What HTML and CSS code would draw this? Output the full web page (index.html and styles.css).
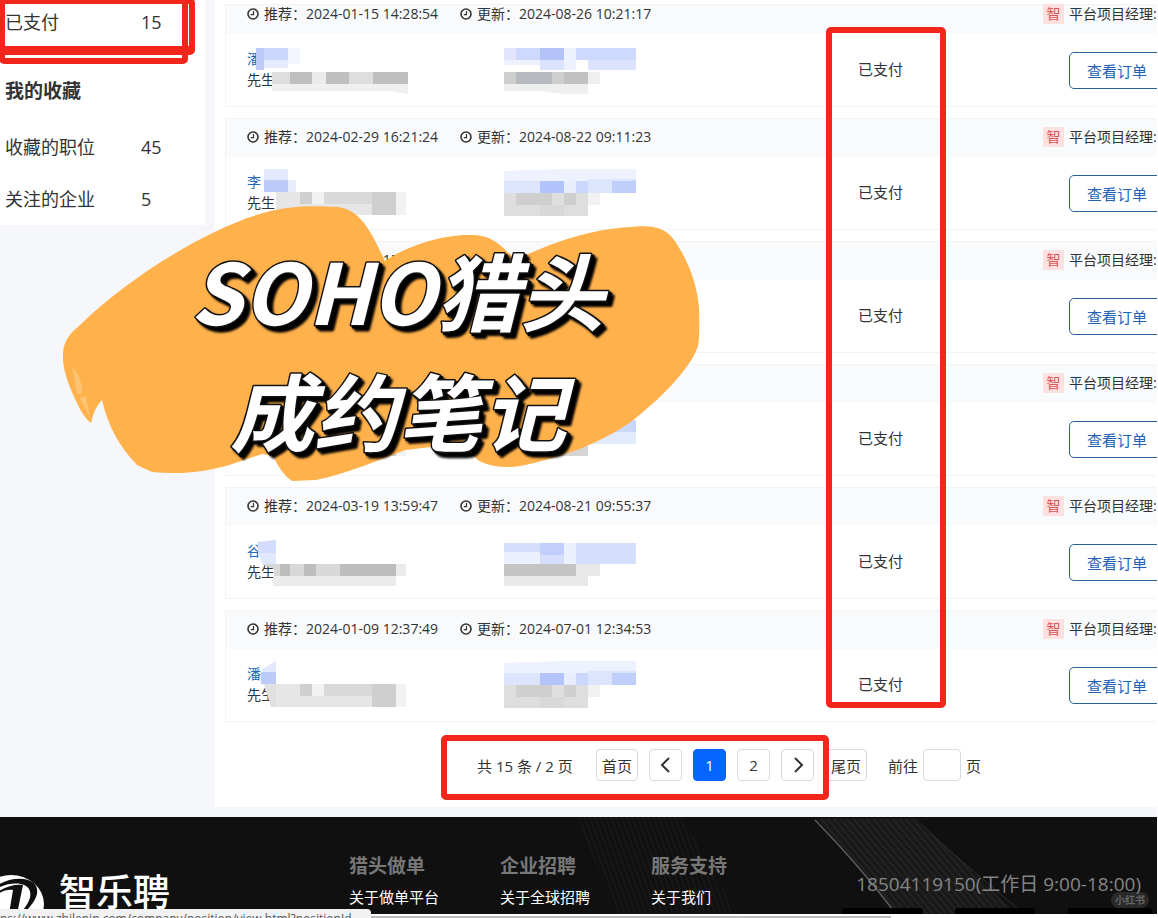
FILE: index.html
```html
<!DOCTYPE html>
<html lang="zh-CN">
<head>
<meta charset="utf-8">
<title>智乐聘</title>
<link rel="stylesheet" href="styles.css">
</head>
<body>
<svg class="defs" aria-hidden="true">
  <symbol id="clock" viewBox="0 0 12 12"><circle cx="6" cy="6" r="5" fill="none" stroke="#333" stroke-width="1.6"/><path d="M6.5 3v3.6H3.8" fill="none" stroke="#333" stroke-width="1.2"/></symbol>
  <symbol id="mosaic-post" viewBox="0 0 132 48">
    <path fill="#eef1fe" d="M0 2L60 0H132V12H0z"/><path fill="#dde5fd" d="M0 12H36V24H0zM84 10H132V24H84z"/><path fill="#b3c3fb" d="M36 12H60V24H36z"/><path fill="#e8eefe" d="M60 12H72V24H60z"/><path fill="#cbd8fc" d="M72 12H84V24H72z"/><path fill="#bfcefb" d="M108 12H132V24H108z"/>
    <path fill="#dedede" d="M0 24H84V47H0z"/><path fill="#cfcfcf" d="M12 24H48V36H12zM60 24H72V36H60z"/><path fill="#f1f1f1" d="M84 24H96V36H84z"/><path fill="#d8d8d8" d="M36 36H60V47H36z"/>
  </symbol>
  <symbol id="mosaic-post-dark" viewBox="0 0 132 48">
    <path fill="#e3e4fd" d="M0 0H12V12H0z"/><path fill="#cdd9fd" d="M12 0H36V12H12zM72 0H132V12H72z"/><path fill="#b4c4fb" d="M36 0H60V12H36z"/><path fill="#edf2fe" d="M60 0H72V22H60zM0 12H36V17H0z"/><path fill="#dbe3fe" d="M36 12H60V22H36zM84 12H132V22H84z"/>
    <path fill="#cecece" d="M0 24H12V36H0zM48 24H60V36H48z"/><path fill="#b7babf" d="M12 24H48V36H12z"/><path fill="#c1c1c1" d="M60 24H84V36H60z"/><path fill="#efefef" d="M84 24H96V36H84zM0 36H84V46H60L36 43H0z"/>
  </symbol>
  <symbol id="mosaic-info" viewBox="0 0 132 24">
    <path fill="#e6e6e6" d="M0 0H120V23H0z"/><path fill="#cfcfcf" d="M24 0H36V12H24zM96 0H120V23H96z"/><path fill="#f2f2f2" d="M36 0H48V12H36zM120 0H130V23H120z"/><path fill="#d9d9d9" d="M48 0H96V12H48z"/>
  </symbol>
  <symbol id="mosaic-info-dark" viewBox="0 0 136 24">
    <path fill="#dedede" d="M0 0H136V12H0z"/><path fill="#bfbfbf" d="M18 0H40V12H18zM54 0H77V12H54zM101 0H136V12H101z"/><path fill="#ebebeb" d="M40 0H54V12H40z"/><path fill="#f0f0f0" d="M0 12H136V22L118 19H0z"/>
  </symbol>
</svg>

<div class="page">
  <div class="content">
    <aside class="sidebar">
      <nav class="menu">
        <a class="menu-item menu-item-first" href="#"><span>已支付</span><span>15</span></a>
        <h2 class="menu-title">我的收藏</h2>
        <a class="menu-item" href="#"><span>收藏的职位</span><span>45</span></a>
        <a class="menu-item" href="#"><span>关注的企业</span><span>5</span></a>
      </nav>
    </aside>

    <main class="main">
      <section class="orders">
        <article class="card card-cut">
          <header class="card-head">
            <span class="stamp"><svg class="clock"><use href="#clock"/></svg>推荐：<time>2024-01-15 14:28:54</time></span>
            <span class="stamp"><svg class="clock"><use href="#clock"/></svg>更新：<time>2024-08-26 10:21:17</time></span>
            <span class="manager"><b class="tag">智</b>平台项目经理:</span>
          </header>
          <div class="card-body">
            <div class="person"><a href="#">潘</a><span>先生</span></div>
            <span class="status">已支付</span>
            <button class="order-btn" type="button">查看订单</button>
            <svg class="mosaic" viewBox="0 0 420 72"><path fill="#bccbfa" d="M30 14H38V36H30z"/><path fill="#c9d7fc" d="M38 14H62V26H38z"/><path fill="#e5ebfe" d="M38 26H62V34H38z"/><path fill="#f4f6ff" d="M62 14H74V30H62z"/><use href="#mosaic-info-dark" x="46" y="38" width="136" height="24"/><use href="#mosaic-post-dark" x="278" y="14" width="132" height="48"/></svg>
          </div>
        </article>

        <article class="card">
          <header class="card-head">
            <span class="stamp"><svg class="clock"><use href="#clock"/></svg>推荐：<time>2024-02-29 16:21:24</time></span>
            <span class="stamp"><svg class="clock"><use href="#clock"/></svg>更新：<time>2024-08-22 09:11:23</time></span>
            <span class="manager"><b class="tag">智</b>平台项目经理:</span>
          </header>
          <div class="card-body">
            <div class="person"><a href="#">李</a><span>先生</span></div>
            <span class="status">已支付</span>
            <button class="order-btn" type="button">查看订单</button>
            <svg class="mosaic" viewBox="0 0 420 72"><path fill="#e3e9fd" d="M38 12H62V23H38z"/><path fill="#bccbfa" d="M38 23H62V35H38z"/><path fill="#e8edfe" d="M62 23H70V35H62z"/><use href="#mosaic-info" x="50" y="35" width="132" height="24"/><use href="#mosaic-post" x="278" y="12" width="132" height="48"/></svg>
          </div>
        </article>

        <article class="card">
          <header class="card-head">
            <span class="stamp"><svg class="clock"><use href="#clock"/></svg>推荐：<time>2024-03-05 15:20:31</time></span>
            <span class="stamp"><svg class="clock"><use href="#clock"/></svg>更新：<time>2024-08-22 09:10:52</time></span>
            <span class="manager"><b class="tag">智</b>平台项目经理:</span>
          </header>
          <div class="card-body">
            <div class="person"></div>
            <span class="status">已支付</span>
            <button class="order-btn" type="button">查看订单</button>
          </div>
        </article>

        <article class="card">
          <header class="card-head">
            <span class="manager"><b class="tag">智</b>平台项目经理:</span>
          </header>
          <div class="card-body">
            <div class="person"></div>
            <span class="status">已支付</span>
            <button class="order-btn" type="button">查看订单</button>
            <svg class="mosaic" viewBox="0 0 420 72"><use href="#mosaic-info" x="50" y="30" width="132" height="24"/><path fill="#c9d7fc" d="M278 17H410V29H278z"/><path fill="#e2eafd" d="M278 29H410V41H278z"/><path fill="#d5d5d5" d="M278 41H362V53H278z"/></svg>
          </div>
        </article>

        <article class="card">
          <header class="card-head">
            <span class="stamp"><svg class="clock"><use href="#clock"/></svg>推荐：<time>2024-03-19 13:59:47</time></span>
            <span class="stamp"><svg class="clock"><use href="#clock"/></svg>更新：<time>2024-08-21 09:55:37</time></span>
            <span class="manager"><b class="tag">智</b>平台项目经理:</span>
          </header>
          <div class="card-body">
            <div class="person"><a href="#">谷</a><span>先生</span></div>
            <span class="status">已支付</span>
            <button class="order-btn" type="button">查看订单</button>
            <svg class="mosaic" viewBox="0 0 420 72"><path fill="#d3dcfc" d="M32 16L50 14V27H32z"/><path fill="#e1e8fd" d="M32 27H50V38H36z"/><path fill="#d8d8d8" d="M36 38H170V50H48V43z"/><path fill="#bdbdbd" d="M54 38H64V50H54zM78 38H90V50H78zM114 38H170V50H114z"/><path fill="#ebebeb" d="M47 50H170V60H47zM170 38H180V50H170z"/><path fill="#d5dffd" d="M278 17H410V38H278z"/><path fill="#c2cffc" d="M314 17H338V29H314z"/><path fill="#eaf0fe" d="M338 17H350V38H338zM278 26H314V38H278z"/><path fill="#c4c4c4" d="M278 38H350V50H278z"/><path fill="#e9e9e9" d="M278 50H362V60H278zM350 38H374V50H350z"/></svg>
          </div>
        </article>

        <article class="card">
          <header class="card-head">
            <span class="stamp"><svg class="clock"><use href="#clock"/></svg>推荐：<time>2024-01-09 12:37:49</time></span>
            <span class="stamp"><svg class="clock"><use href="#clock"/></svg>更新：<time>2024-07-01 12:34:53</time></span>
            <span class="manager"><b class="tag">智</b>平台项目经理:</span>
          </header>
          <div class="card-body">
            <div class="person"><a href="#">潘</a><span>先生</span></div>
            <span class="status">已支付</span>
            <button class="order-btn" type="button">查看订单</button>
            <svg class="mosaic" viewBox="0 0 420 72"><path fill="#e3e9fd" d="M36 20L50 12V23H36z"/><path fill="#bccbfa" d="M35 23H50V35H35z"/><path fill="#e0e0e0" d="M38 35H50V58H45z"/><use href="#mosaic-info" x="50" y="35" width="132" height="24"/><use href="#mosaic-post" x="278" y="12" width="132" height="48"/></svg>
          </div>
        </article>
      </section>

      <nav class="pager" aria-label="分页">
        <span class="pager-total">共 15 条 / 2 页</span>
        <button class="pager-btn" type="button">首页</button>
        <button class="pager-btn" type="button" aria-label="上一页"><svg class="arrow" viewBox="0 0 16 16"><path d="M11 1L4 8l7 7"/></svg></button>
        <button class="pager-btn pager-current" type="button">1</button>
        <button class="pager-btn" type="button">2</button>
        <button class="pager-btn" type="button" aria-label="下一页"><svg class="arrow" viewBox="0 0 16 16"><path d="M5 1l7 7-7 7"/></svg></button>
        <button class="pager-btn" type="button">尾页</button>
        <label class="pager-jump">前往<input type="text" aria-label="页码">页</label>
      </nav>
    </main>
  </div>

  <footer class="footer">
    <svg class="footer-art" viewBox="0 0 600 97" preserveAspectRatio="xMaxYMin slice" aria-hidden="true">
      <defs>
        <pattern id="stripes" width="5" height="5" patternUnits="userSpaceOnUse" patternTransform="rotate(-40)"><path d="M0 0V5" stroke="#222" stroke-width="4"/></pattern>
        <pattern id="ripples" width="5" height="5" patternUnits="userSpaceOnUse" patternTransform="rotate(-20)"><path d="M0 0V5" stroke="#191919" stroke-width="3"/></pattern>
      </defs>
      <path fill="url(#ripples)" d="M20 0H125L180 97H60z"/>
      <path fill="#181818" d="M260 2H360L460 97H340z"/>
      <path fill="url(#stripes)" d="M260 2H360L460 97H340z"/>
      <path fill="none" stroke="#5c5c5c" stroke-width="1.5" d="M258 3Q300 46 336 93"/>
      <path fill="none" stroke="#303030" d="M375 18Q420 58 460 91"/>
      <path d="M285 97V93q0-2 4-2h73q4 0 4 2v4zM398 97V93q0-2 4-2h72q4 0 4 2v4zM511 97V93q0-2 4-2h76q4 0 4 2v4z"/>
    </svg>
    <div class="brand">
      <svg class="brand-mark" viewBox="0 0 44 44" aria-hidden="true">
        <ellipse cx="11" cy="30" rx="33" ry="29" fill="#fff"/>
        <path fill="#101010" d="M-2 11C8 4 26 2 34 9C41 17 36 27 25 38L19 41C28 31 33 22 29 15C24 8 10 8-2 14z"/>
        <path fill="#101010" d="M-2 18C6 12 16 10 23 11L17 40H9L13 16C8 15 3 17-2 20z"/>
      </svg>
      <span class="brand-name">智乐聘</span>
    </div>
    <div class="links">
      <div class="link-col"><h3>猎头做单</h3><a href="#">关于做单平台</a></div>
      <div class="link-col"><h3>企业招聘</h3><a href="#">关于全球招聘</a></div>
      <div class="link-col"><h3>服务支持</h3><a href="#">关于我们</a></div>
    </div>
    <p class="phone">18504119150(工作日 9:00-18:00)</p>
    <span class="watermark">小红书</span>
  </footer>
  <div class="scrollbar"></div>
  <div class="url-hint"><span>https://www.zhilepin.com/company/position/view.html?positionId</span></div>

  <svg class="sticker" viewBox="0 0 660 290" role="img" aria-label="SOHO猎头 成约笔记">
    <g transform="translate(-50 -200)">
      <path fill="#ffb14c" d="M63 360C62 343 68 335 80 325C130 276 210 228 260 214C290 205 315 206 338 207C360 210 370 229 385 261C405 247 440 235 468 235C493 234 500 245 516 260C545 245 590 229 630 227C652 225 661 227 671 236C685 254 697 280 699 308Q700 335 698 346C690 371 655 403 632 421C600 444 560 458 520 466C500 469 480 465 474 456L440 446L405 450C380 460 345 474 316 480L292 481Q282 475 273 456L262 454L238 462C210 472 180 475 152 472L137 465C118 445 108 425 102 400Q94 408 91 423Q84 418 78 405Q64 377 63 360z"/>
      <path fill="#ffd59b" opacity=".5" d="M72 366Q80 377 82 386Q82 398 77 393zM86 396L90 418L80 398z"/>
      <g class="sticker-text"><text x="397" y="325">SOHO猎头</text><text x="398" y="445">成约笔记</text></g>
    </g>
  </svg>
  <div class="mark mark-paid-back"></div>
  <div class="mark mark-paid"></div>
  <div class="mark mark-status"></div>
  <div class="mark mark-pager"></div>
</div>
</body>
</html>
```

FILE: styles.css
```css
* { box-sizing: border-box; }

body {
  margin: 0;
  background: #fff;
  color: #333;
  font-family: "Open Sans", "Noto Sans CJK SC", sans-serif;
  font-size: 15px;
  font-weight: 400;
  overflow: hidden;
}

a { color: inherit; text-decoration: none; }
h2, h3, p { margin: 0; }
button, input { font: inherit; color: inherit; background: #fff; padding: 0; }

.defs { position: absolute; width: 0; height: 0; }

.page {
  position: relative;
  min-height: 100vh;
  padding-right: 1px;
  overflow: hidden;
}

.content {
  display: flex;
  gap: 10px;
  padding-bottom: 10px;
  background: #f5f7fb;
}

.sidebar { flex: 0 0 205px; }
.menu { background: #fff; }
.menu-item {
  display: grid;
  grid-template-columns: 136px 1fr;
  align-items: center;
  height: 52px;
  padding-left: 5px;
  font-size: 18px;
  line-height: 26px;
}
.menu-item-first { height: 44px; margin-bottom: 17px; }
.menu-title {
  height: 60px;
  padding-left: 5px;
  font-size: 19px;
  line-height: 60px;
}

.main {
  flex: 1;
  min-width: 0;
  padding-left: 10px;
  padding-bottom: 26px;
  background: #fff;
  overflow: hidden;
}
.orders {
  display: flex;
  flex-direction: column;
  gap: 11px;
  padding-top: 4px;
}
.card {
  border: 1px solid #f2f3f5;
  border-right: 0;
}
.card-head {
  display: flex;
  align-items: center;
  gap: 22px;
  height: 38px;
  padding-left: 21px;
  padding-bottom: 2px;
  background: #f9fafc;
  font-size: 14px;
  line-height: 20px;
  white-space: nowrap;
}
.card-cut .card-head { height: 29px; padding-bottom: 11px; }
.stamp, .manager { display: flex; align-items: center; }
.clock { width: 12px; height: 12px; margin-right: 5px; }
.manager { width: 114px; margin-left: auto; gap: 5px; }
.tag {
  width: 21px;
  background: #fde0e0;
  color: #d9575a;
  font-weight: 400;
  text-align: center;
}

.card-body {
  position: relative;
  display: grid;
  grid-template-columns: 1fr 211px 88px;
  align-items: center;
  height: 72px;
  padding-left: 21px;
}
.person {
  display: flex;
  flex-direction: column;
  padding-bottom: 2px;
  font-size: 14px;
  line-height: 21px;
}
.person a { color: #2368b8; }
.status { padding-bottom: 3px; }
.order-btn {
  width: 96px;
  height: 37px;
  border: 1px solid #2a6099;
  border-radius: 5px;
  color: #2562b5;
}
.mosaic {
  position: absolute;
  top: 0;
  left: 0;
  width: 420px;
  height: 72px;
}

.pager {
  display: flex;
  align-items: center;
  gap: 11px;
  padding: 27px 0 0 252px;
}
.pager-total { min-width: 108px; }
.pager-btn {
  display: flex;
  align-items: center;
  justify-content: center;
  min-width: 33px;
  height: 32px;
  padding: 0 5px;
  border: 1px solid #d9dadd;
  border-radius: 4px;
}
.pager-current { background: #0665ff; border-color: #0665ff; color: #fff; }
.arrow { width: 16px; height: 16px; fill: none; stroke: #333; stroke-width: 2; }
.pager-jump { display: flex; align-items: center; gap: 5px; margin-left: 10px; }
.pager-jump input {
  width: 38px;
  height: 32px;
  border: 1px solid #d9dadd;
  border-radius: 4px;
}

.footer {
  position: relative;
  display: flex;
  height: 97px;
  padding-right: 16px;
  background: #101010;
  overflow: hidden;
}
.footer-art { position: absolute; top: 0; right: 0; width: 600px; height: 97px; }
.brand { display: flex; flex: 0 0 349px; align-items: flex-start; gap: 15px; }
.brand-mark { width: 44px; height: 44px; margin-top: 57px; }
.brand-name {
  margin-top: 46px;
  color: #fff;
  font-family: "Noto Sans CJK SC", sans-serif;
  font-size: 37px;
  font-weight: 500;
  line-height: 54px;
}
.links { position: relative; display: flex; padding-top: 36px; }
.link-col { width: 151px; color: #fff; }
.link-col h3 { margin-bottom: 6px; color: #777; font-size: 19px; line-height: 26px; }
.link-col a { display: block; line-height: 24px; }
.phone {
  position: relative;
  margin-left: auto;
  padding-top: 54px;
  color: #858585;
  font-size: 19px;
  line-height: 26px;
}
.watermark {
  position: absolute;
  right: 8px;
  bottom: 6px;
  padding: 0 4px;
  border-radius: 8px;
  background: rgba(90, 90, 90, .35);
  color: #666;
  font-size: 10px;
  font-weight: 700;
  line-height: 16px;
}

.scrollbar {
  width: 77%;
  height: 2px;
  margin-top: 2px;
  background: #bdbdbd;
}
.url-hint {
  position: absolute;
  bottom: 0;
  left: 0;
  width: 371px;
  height: 9px;
  border-top-right-radius: 4px;
  background: #f2f2f2;
  color: #555;
  font-size: 12px;
  line-height: 20px;
  white-space: nowrap;
  overflow: hidden;
}
.url-hint span { margin-left: -16px; }

.sticker { position: absolute; top: 200px; left: 50px; width: 660px; height: 290px; }
.sticker text {
  font-family: "Noto Sans CJK SC", sans-serif;
  font-size: 84px;
  font-style: italic;
  font-weight: 700;
  text-anchor: middle;
}
.sticker-text {
  fill: #fff;
  stroke: #111;
  stroke-width: 3px;
  stroke-linejoin: round;
  paint-order: stroke;
  filter: drop-shadow(2px 2px 0 #000) drop-shadow(3px 3px 1px #000);
}

.mark { position: absolute; border: 6px solid #f3261b; border-radius: 5px; pointer-events: none; }
.mark-paid-back { top: -2px; left: -1px; width: 196px; height: 57px; border-bottom-width: 9px; }
.mark-paid { top: -2px; left: -1px; width: 189px; height: 66px; }
.mark-status { top: 27px; left: 826px; width: 120px; height: 681px; }
.mark-pager { top: 735px; left: 441px; width: 388px; height: 65px; }
```
